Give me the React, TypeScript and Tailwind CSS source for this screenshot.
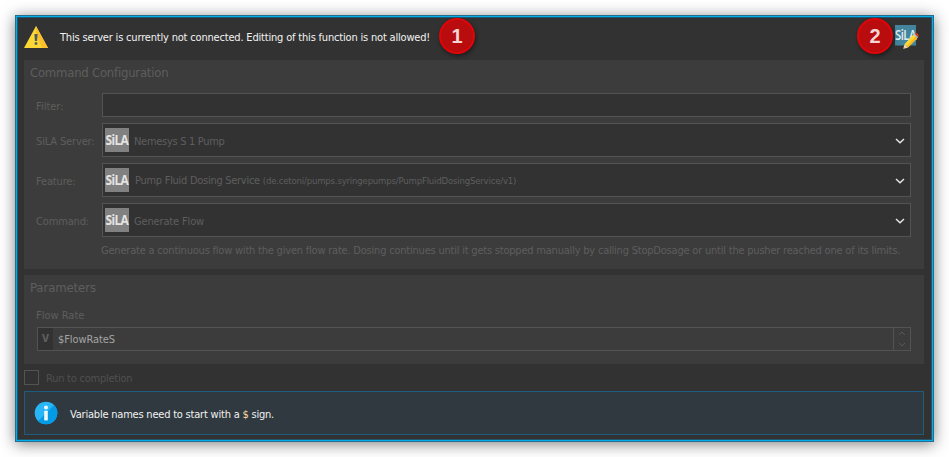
import React from "react";

function SilaLogo({ size, color }: { size: number; color: string }) {
  return (
    <svg width={size} height={size} viewBox="0 0 24 24" className="block shrink-0 overflow-visible">
      <rect width="24" height="24" fill={color} />
      <text
        transform="translate(0.5 17.3) scale(0.83 1)"
        fontFamily="'Open Sans', 'Noto Sans', sans-serif"
        fontWeight="700"
        fontSize="14.4"
        letterSpacing="-0.8"
        fill="#e4e4e4"
      >
        SiLA
      </text>
    </svg>
  );
}

function EditServerIcon() {
  return (
    <svg width="25" height="25" viewBox="0 0 25 25" className="block shrink-0 overflow-visible">
      <rect width="21" height="20.5" fill="#43859c" />
      <text
        transform="translate(0 14.9) scale(0.84 1)"
        fontFamily="'Open Sans', 'Noto Sans', sans-serif"
        fontWeight="600"
        fontSize="13.4"
        letterSpacing="-0.6"
        fill="#e4eef1"
      >
        SiLA
      </text>
      <path d="M8.2 23.9 9.6 19 13 22.6Z" fill="#f3d9b0" />
      <path d="M9.6 19 18.5 9.6 22.2 13.2 13 22.6Z" fill="#fdd835" />
      <path d="M11.6 21.2 20.6 11.6 22.2 13.2 13 22.6Z" fill="#f9b91f" />
      <path d="M18.5 9.6 19.6 8.5 23.2 12.1 22.2 13.2Z" fill="#b0bec5" />
      <path d="M19.6 8.5Q21 7.3 22.8 8.7 24.6 10.5 23.2 12.1Z" fill="#dd3a16" />
      <path d="M8.2 23.9 8.8 22.2 10 23.4Z" fill="#8a7a64" />
    </svg>
  );
}

function Badge({ label, position }: { label: string; position: string }) {
  return (
    <div
      className={`absolute top-[2px] flex h-9 w-9 items-center justify-center rounded-full border-2 border-[#e00508] bg-[#b80c0e] pb-px font-['Liberation_Sans',Arial,sans-serif] text-[20px] leading-none font-bold text-[#f3d5d5] shadow-[1px_2px_4px_rgba(0,0,0,0.45)] ${position}`}
    >
      {label}
    </div>
  );
}

function WarningIcon() {
  return (
    <svg width="24" height="22" viewBox="0 0 24 22" className="block shrink-0">
      <path d="M12 0 24 22H0Z" fill="#fdd835" />
      <path d="M12 0 24 22H18L12 8Z" fill="#fbc02d" />
      <path d="M10.4 8h3.2l-.5 7h-2.2zM10.7 16.2h2.6v2.5h-2.6z" fill="#4e5b5e" />
    </svg>
  );
}

function InfoIcon() {
  return (
    <svg width="24" height="24" viewBox="0 0 24 24" className="block shrink-0">
      <circle cx="12" cy="12" r="11.3" fill="#29b6f6" />
      <path d="M20 4A11.3 11.3 0 0 1 4 20Z" fill="#039be5" />
      <circle cx="12" cy="6.6" r="2" fill="#eef7fb" />
      <rect x="10.2" y="9.8" width="3.6" height="9.6" fill="#eef7fb" />
    </svg>
  );
}

function ComboRow({ label, textClass, children }: { label: string; textClass: string; children: React.ReactNode }) {
  return (
    <div className="flex h-[34px] items-center">
      <div className="w-[66px] shrink-0 pt-[3px] tracking-[-0.15px] whitespace-nowrap">{label}</div>
      <div className="flex h-[34px] flex-1 items-center border border-[#535353] bg-[#323232] pr-[5px] pl-[2px]">
        <SilaLogo size={24} color="#818181" />
        <div className={`flex-1 whitespace-nowrap ${textClass}`}>{children}</div>
        <svg width="10" height="6" viewBox="0 0 10 6" className="mt-px block">
          <path d="M1 1 5 4.8 9 1" fill="none" stroke="#e8e8e8" strokeWidth="1.4" />
        </svg>
      </div>
    </div>
  );
}

export default function App() {
  return (
    <div className="h-[457px] w-[949px] overflow-hidden bg-white pt-[15px] pl-[15px] font-['DejaVu_Sans_Condensed','DejaVu_Sans',sans-serif] text-[11px] leading-[14px] text-[#5e5e5e]">
      <div className="relative h-[427px] w-[919px] border border-[#236f8d] shadow-[0_2px_14px_rgba(0,0,0,0.5)]">
        <div className="h-full border border-[#00aeef]">
          <div className="flex h-full flex-col border border-[#20566b] bg-[#323232] pr-[7px] pl-[6px]">
            <div className="flex h-[42px] items-start pt-[8px] text-[#f2f2f2]">
              <WarningIcon />
              <div className="flex-1 pt-[5px] pl-3 tracking-[-0.185px] whitespace-nowrap">
                This server is currently not connected. Editting of this function is not allowed!
              </div>
              <div className="mt-[-1px] mr-1">
                <EditServerIcon />
              </div>
            </div>

            <section className="h-[209px] bg-[#3c3c3c] pr-[13px] pl-3">
              <h2 className="-ml-[6px] h-[33px] pt-[5px] text-[13px] leading-[16px] tracking-[-0.23px]">Command Configuration</h2>
              <div className="flex flex-col gap-[6px]">
                <div className="flex h-6 items-center">
                  <div className="w-[66px] pt-[3px]">Filter:</div>
                  <div className="h-6 flex-1 border border-[#535353] bg-[#323232]" />
                </div>
                <ComboRow label="SiLA Server:" textClass="pt-[3px] pl-[5px] tracking-[-0.3px]">
                  Nemesys S 1 Pump
                </ComboRow>
                <ComboRow label="Feature:" textClass="pt-px pl-[6px] tracking-[-0.28px]">
                  Pump Fluid Dosing Service <span className="text-[9.5px] tracking-[-0.18px]">(de.cetoni/pumps.syringepumps/PumpFluidDosingService/v1)</span>
                </ComboRow>
                <ComboRow label="Command:" textClass="pt-[3px] pl-[5px] tracking-[-0.15px]">
                  Generate Flow
                </ComboRow>
              </div>
              <p className="pt-[7px] pl-[65px] tracking-[-0.21px] whitespace-nowrap">
                Generate a continuous flow with the given flow rate. Dosing continues until it gets stopped manually by calling StopDosage or until the pusher reached one of its limits.
              </p>
            </section>

            <section className="mt-[6px] h-[89px] bg-[#3c3c3c] pr-[13px] pl-[13px]">
              <h2 className="-ml-[7px] h-[33px] pt-[5px] text-[13px] leading-[16px] tracking-[-0.1px]">Parameters</h2>
              <div className="-ml-px h-[19px] pt-px">Flow Rate</div>
              <div className="flex h-6 border border-[#535353]">
                <div className="w-[15px] bg-[#323232] text-center text-[10px] leading-[22px] font-bold text-[#606060]">V</div>
                <div className="flex-1 pl-[5px] leading-[24px] tracking-[-0.1px] text-[#a4a4a4]">$FlowRateS</div>
                <div className="flex w-[17px] flex-col items-center justify-between border-l border-[#535353] py-[3px]">
                  <svg width="8" height="5" viewBox="0 0 8 5"><path d="M1 4 4 1 7 4" fill="none" stroke="#575757" /></svg>
                  <svg width="8" height="5" viewBox="0 0 8 5"><path d="M1 1 4 4 7 1" fill="none" stroke="#575757" /></svg>
                </div>
              </div>
            </section>

            <div className="mt-[6px] flex h-[15px] items-center text-[#505050]">
              <div className="h-[15px] w-[15px] border border-[#535353]" />
              <div className="pt-[2px] pl-[7px] tracking-[-0.24px]">Run to completion</div>
            </div>

            <div className="mt-[6px] flex h-11 items-center border border-[#1b5c80] bg-[#30393f] pl-[9px] text-[#f2f2f2]">
              <InfoIcon />
              <div className="pt-[3px] pl-3 tracking-[-0.21px]">Variable names need to start with a <span className="text-[#ffd9a8]">$</span> sign.</div>
            </div>
          </div>
        </div>
        <Badge label="1" position="left-[423px]" />
        <Badge label="2" position="left-[841px]" />
      </div>
    </div>
  );
}
